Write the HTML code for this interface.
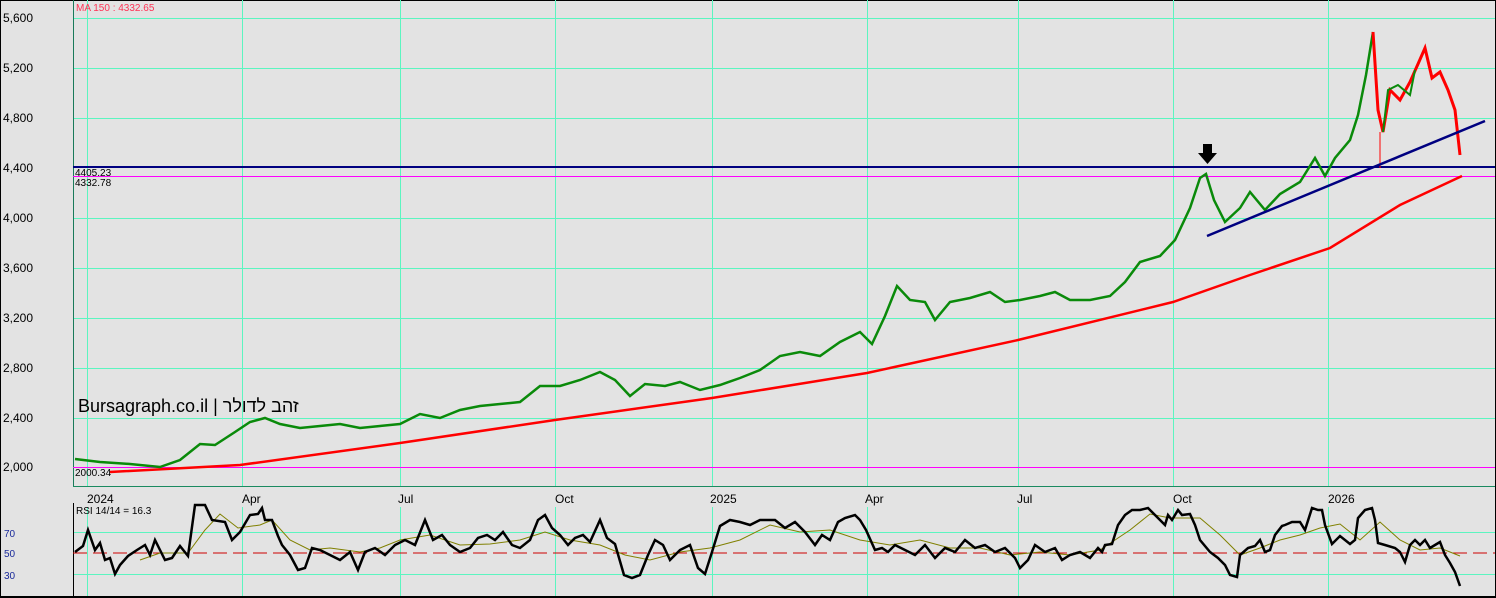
<!DOCTYPE html>
<html><head><meta charset="utf-8"><style>
html,body{margin:0;padding:0;background:#e3e3e3;}
svg{display:block;font-family:"Liberation Sans",Arial,sans-serif;}
</style></head><body>
<svg width="1496" height="598" viewBox="0 0 1496 598" xmlns="http://www.w3.org/2000/svg">
<rect x="0" y="0" width="1496" height="598" fill="#e3e3e3"/>
<rect x="0.5" y="0.5" width="1495" height="597" fill="none" stroke="#000"/>
<g stroke="#5cf5c0" stroke-width="1">
<line x1="73" y1="18.5" x2="1495" y2="18.5"/><line x1="73" y1="68.5" x2="1495" y2="68.5"/>
<line x1="73" y1="118.5" x2="1495" y2="118.5"/><line x1="73" y1="218.5" x2="1495" y2="218.5"/>
<line x1="73" y1="268.5" x2="1495" y2="268.5"/><line x1="73" y1="318.5" x2="1495" y2="318.5"/>
<line x1="73" y1="368.5" x2="1495" y2="368.5"/><line x1="73" y1="418.5" x2="1495" y2="418.5"/>
<line x1="73" y1="467.5" x2="1495" y2="467.5"/>
<line x1="87.5" y1="0" x2="87.5" y2="486"/><line x1="242.5" y1="0" x2="242.5" y2="486"/>
<line x1="400.5" y1="0" x2="400.5" y2="486"/><line x1="555.5" y1="0" x2="555.5" y2="486"/>
<line x1="712.5" y1="0" x2="712.5" y2="486"/><line x1="867.5" y1="0" x2="867.5" y2="486"/>
<line x1="1018.5" y1="0" x2="1018.5" y2="486"/><line x1="1173.5" y1="0" x2="1173.5" y2="486"/>
<line x1="1328.5" y1="0" x2="1328.5" y2="486"/>
<line x1="73" y1="532.5" x2="1495" y2="532.5"/><line x1="73" y1="574.5" x2="1495" y2="574.5"/>
<line x1="87.5" y1="507" x2="87.5" y2="596"/><line x1="242.5" y1="507" x2="242.5" y2="596"/>
<line x1="400.5" y1="507" x2="400.5" y2="596"/><line x1="555.5" y1="507" x2="555.5" y2="596"/>
<line x1="712.5" y1="507" x2="712.5" y2="596"/><line x1="867.5" y1="507" x2="867.5" y2="596"/>
<line x1="1018.5" y1="507" x2="1018.5" y2="596"/><line x1="1173.5" y1="507" x2="1173.5" y2="596"/>
<line x1="1328.5" y1="507" x2="1328.5" y2="596"/>
</g>
<line x1="73.5" y1="0" x2="73.5" y2="487" stroke="#1a7a5a"/>
<line x1="73" y1="486.5" x2="1495" y2="486.5" stroke="#1a8a60"/>
<line x1="73.5" y1="503" x2="73.5" y2="597" stroke="#000"/>
<line x1="1495.5" y1="0" x2="1495.5" y2="598" stroke="#000"/>
<line x1="0" y1="596.5" x2="1496" y2="596.5" stroke="#000"/>
<g font-size="12" fill="#000">
<text x="3" y="22">5,600</text><text x="3" y="72">5,200</text><text x="3" y="122">4,800</text>
<text x="3" y="172">4,400</text><text x="3" y="222">4,000</text><text x="3" y="272">3,600</text>
<text x="3" y="322">3,200</text><text x="3" y="372">2,800</text><text x="3" y="422">2,400</text>
<text x="3" y="471">2,000</text>
</g>
<g font-size="10" fill="#1a2a9a"><text x="4" y="537">70</text><text x="4" y="557">50</text><text x="4" y="579">30</text></g>
<g font-size="12" fill="#000">
<text x="87" y="503">2024</text><text x="242" y="503">Apr</text><text x="398" y="503">Jul</text>
<text x="555" y="503">Oct</text><text x="710" y="503">2025</text><text x="865" y="503">Apr</text>
<text x="1017" y="503">Jul</text><text x="1173" y="503">Oct</text><text x="1328" y="503">2026</text>
</g>
<text x="76" y="11" font-size="10" fill="#ff3355">MA 150 : 4332.65</text>
<text x="76" y="514" font-size="10" fill="#000">RSI 14/14 = 16.3</text>
<line x1="73" y1="467.5" x2="1495" y2="467.5" stroke="#ff00ff"/>
<line x1="73" y1="167" x2="1495" y2="167" stroke="#000080" stroke-width="2"/>
<line x1="73" y1="176.5" x2="1495" y2="176.5" stroke="#ff00ff"/>
<text x="75" y="176" font-size="10" fill="#000">4405.23</text>
<text x="75" y="186" font-size="10" fill="#000">4332.78</text>
<text x="75" y="476" font-size="10" fill="#000">2000.34</text>
<polyline fill="none" stroke="#ff0000" stroke-width="2.5" points="110,472 240,465 400,443 555,420 712,398 867,373 1018,340 1173,302 1250,275 1330,248 1400,205 1462,176"/>
<polyline fill="none" stroke="#0a8a0a" stroke-width="2.5" points="75,459 100,462 130,464 160,467 180,460 200,444 215,445 235,432 250,422 265,418 280,424 300,428 320,426 340,424 360,428 380,426 400,424 420,414 440,418 460,410 480,406 500,404 520,402 540,386 560,386 580,380 600,372 615,380 630,396 645,384 665,386 680,382 700,390 720,385 740,378 760,370 780,356 800,352 820,356 840,342 860,332 872,344 885,316 897,286 910,300 925,302 935,320 950,302 970,298 990,292 1005,302 1020,300 1040,296 1055,292 1070,300 1090,300 1110,296 1125,282 1140,262 1160,256 1175,240 1190,208 1200,178 1206,174 1214,200 1225,222 1240,208 1250,192 1265,210 1280,194 1300,182 1315,158 1325,176 1335,158 1350,140 1358,115 1366,75 1373,32"/>
<polyline fill="none" stroke="#ff0000" stroke-width="3" points="1373,32 1378,110 1383,132 1390,90 1400,100 1410,82 1418,64 1425,48 1432,78 1440,72 1448,90 1455,110 1460,155"/>
<polyline fill="none" stroke="#0a8a0a" stroke-width="2" points="1383,132 1388,90 1398,85 1410,95 1415,70"/>
<line x1="1380" y1="132" x2="1380" y2="168" stroke="#ff0000"/>
<line x1="1207" y1="236" x2="1485" y2="121" stroke="#000080" stroke-width="2.5"/>
<path d="M1203,144 h9 v9 h5 l-9.5,11 l-9.5,-11 h5 z" fill="#000"/>
<text x="78" y="412" font-size="18" fill="#000" font-family="'Liberation Sans','DejaVu Sans',sans-serif">Bursagraph.co.il | זהב לדולר</text>
<line x1="73" y1="553" x2="1495" y2="553" stroke="#cc0000" stroke-dasharray="14,6"/>
<polyline fill="none" stroke="#808000" stroke-width="1" points="140,560 160,553 188,553 205,530 220,514 238,528 260,525 272,520 290,540 310,550 330,548 360,552 380,548 400,540 430,535 460,545 490,544 520,540 545,532 570,540 600,545 625,555 650,560 680,552 710,548 740,540 770,525 800,532 830,530 860,540 890,545 920,540 950,548 980,548 1010,555 1040,552 1070,555 1100,550 1130,530 1150,514 1170,518 1200,518 1220,535 1240,555 1260,548 1280,540 1300,535 1320,528 1340,524 1360,540 1380,522 1400,540 1420,550 1440,548 1460,556"/>
<polyline fill="none" stroke="#000" stroke-width="2.5" points="75,552 83,546 88,530 95,550 100,543 105,560 110,558 115,574 120,565 128,556 137,550 145,545 150,555 155,540 160,550 165,560 172,558 180,546 188,556 195,505 205,505 212,520 225,522 232,540 240,532 250,515 258,514 262,508 265,520 272,520 278,536 282,545 290,555 298,570 305,568 312,548 320,550 330,555 340,560 350,552 358,570 365,552 375,548 385,555 395,545 405,540 415,545 425,520 433,540 442,535 450,545 460,552 470,548 478,538 487,535 495,540 503,532 512,545 520,548 530,540 538,520 545,515 552,528 560,535 568,545 575,538 583,535 590,542 600,520 607,538 615,544 624,575 632,578 640,575 648,555 655,540 663,545 670,560 680,550 690,545 698,568 705,574 712,552 720,526 730,520 740,522 750,525 760,520 775,520 785,528 795,522 805,532 815,545 822,535 830,540 838,522 845,518 855,515 860,520 866,530 875,550 882,548 888,552 895,545 905,550 915,555 925,545 935,558 945,548 955,552 965,540 975,548 985,545 995,552 1005,548 1015,558 1020,568 1028,560 1035,545 1045,552 1055,548 1062,560 1070,555 1080,552 1090,558 1098,548 1102,552 1105,545 1112,544 1118,525 1125,515 1132,510 1140,510 1148,508 1155,515 1160,520 1165,525 1168,515 1172,520 1178,510 1182,515 1190,514 1195,525 1200,540 1210,552 1218,558 1225,565 1230,575 1237,577 1240,555 1248,548 1255,546 1260,540 1265,552 1270,550 1275,535 1282,526 1285,525 1292,522 1300,522 1305,530 1312,508 1318,510 1322,510 1325,525 1332,544 1340,536 1350,544 1355,540 1358,518 1365,510 1372,508 1375,520 1378,543 1385,545 1395,548 1400,552 1405,562 1410,545 1415,540 1420,545 1425,540 1430,548 1435,545 1440,542 1445,555 1450,563 1455,572 1460,586"/>
</svg>
</body></html>
